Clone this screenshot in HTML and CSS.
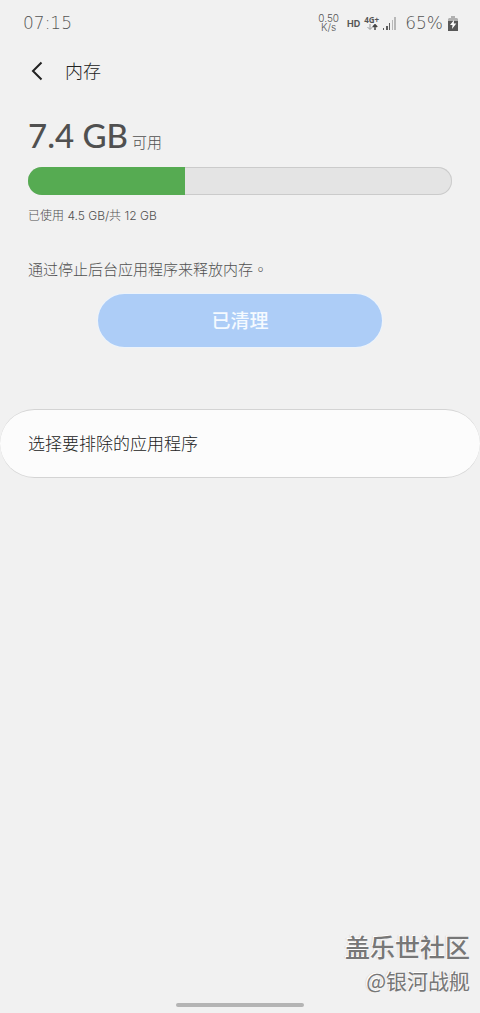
FILE: index.html
```html
<!DOCTYPE html>
<html lang="zh-CN">
<head>
<meta charset="utf-8">
<meta name="viewport" content="width=device-width, initial-scale=1">
<title>内存</title>
<link rel="stylesheet" href="styles.css">
</head>
<body>
<div class="screen">
  <div class="status">
    <span class="clock">07:15</span>
    <div class="indicators">
      <div class="speed"><span>0.50</span><span>K/s</span></div>
      <span class="hd">HD</span>
      <div class="network">
        <span>4G+</span>
        <svg width="12" height="6" viewBox="0 0 12 6" fill="none">
          <path d="M4 0v5M1.500 3L4 5.500L6.500 3" stroke="#999"/>
          <path d="M9 6V1M6.800 3L9 .7L11.200 3" stroke="#444" stroke-width="1.500"/>
        </svg>
      </div>
      <svg class="signal" width="14" height="13" viewBox="0 0 14 13">
        <path d="M0 11h1v2H0zM3 9h2v4H3zM6 6h1v7H6z" fill="#5c5c5c"/>
        <path d="M9 3h1v10H9zM11 0h2v13h-2z" fill="#b8b8b8"/>
      </svg>
      <span class="percent">65%</span>
      <svg class="battery" width="10" height="15" viewBox="0 0 10 15">
        <path d="M3 0h4v2h2l1 1v3H0V3l1-1h2z" fill="#b0b0b0"/>
        <path d="M0 5h10v10H0z" fill="#585858"/>
        <path d="M6 4L2 9h2.500L4 13l4.300-5.500H5.800z" fill="#fff"/>
      </svg>
    </div>
  </div>

  <header class="header">
    <button class="back" aria-label="返回">
      <svg width="12" height="20" viewBox="0 0 12 20" fill="none"><path d="M10.500 1.500L2 10l8.500 8.500" stroke="#222" stroke-width="2"/></svg>
    </button>
    <h1 class="title">内存</h1>
  </header>

  <main class="main">
    <section class="memory">
      <p class="available"><span class="amount">7.4 GB</span><span class="unit">可用</span></p>
      <div class="bar" role="progressbar" aria-label="内存" aria-valuenow="37"><div class="fill" style="width: 37%"></div></div>
      <p class="usage">已使用 4.5 GB/共 12 GB</p>
      <p class="hint">通过停止后台应用程序来释放内存<span lang="zh-TW" class="stop">。</span></p>
      <button class="clean" disabled>已清理</button>
    </section>
    <button class="card">选择要排除的应用程序</button>
  </main>

  <footer class="footer">
    <div class="community">盖乐世社区</div>
    <div class="author">@银河战舰</div>
    <div class="home"></div>
  </footer>
</div>
</body>
</html>
```
FILE: styles.css
```css
* { box-sizing: border-box; }

body {
  margin: 0;
  background: #f1f1f1;
  color: #505050;
  font-family: "Noto Sans", "Noto Sans CJK SC", sans-serif;
}

h1, p { margin: 0; font-weight: 400; }
button { border: 0; padding: 0; font-family: inherit; }
svg { display: block; }

.screen {
  min-height: 100vh;
  display: flex;
  flex-direction: column;
}

.status {
  height: 46px;
  padding: 0 22px 0 23px;
  display: flex;
  align-items: center;
  justify-content: space-between;
  color: #555;
}

.clock, .percent {
  font-family: "DejaVu Sans Light", "DejaVu Sans", sans-serif;
  font-weight: 200;
  font-size: 17px;
  line-height: 20px;
}

.indicators { display: flex; align-items: center; }

.speed {
  display: flex;
  flex-direction: column;
  align-items: center;
  font-family: Inter, sans-serif;
  font-size: 10px;
  font-weight: 300;
  line-height: 9px;
}

.hd {
  margin-left: 8px;
  font-family: Inter, sans-serif;
  font-size: 9px;
  font-weight: 700;
}

.network {
  margin-left: 4px;
  display: flex;
  flex-direction: column;
  align-items: center;
  font-size: 8px;
  font-weight: 700;
  line-height: 8px;
}

.signal { margin-left: 4px; }
.percent { margin-left: 8px; }
.battery { margin-left: 5px; }

.header {
  height: 50px;
  padding: 0 28px;
  display: flex;
  align-items: center;
  gap: 19px;
}

.back {
  width: 18px;
  height: 32px;
  display: flex;
  align-items: center;
  justify-content: center;
  background: none;
}

.title {
  padding-bottom: 3px;
  font-family: "Noto Sans CJK SC", sans-serif;
  font-weight: 300;
  font-size: 18px;
  line-height: 24px;
  color: #222;
}

.main { flex: 1; }

.memory {
  padding: 19px 28px 0;
  display: flex;
  flex-direction: column;
}

.available {
  display: flex;
  align-items: baseline;
  gap: 4px;
  line-height: 40px;
}

.amount {
  font-family: Lato, sans-serif;
  font-size: 33px;
  font-weight: 500;
}

.unit, .hint {
  font-family: "Noto Sans CJK SC", sans-serif;
  font-weight: 300;
  font-size: 15px;
}

.unit { line-height: 20px; }

.bar {
  height: 28px;
  margin-top: 12px;
  border-radius: 14px;
  background: #e4e4e4;
  box-shadow: inset 0 0 0 1px #cbcbcb;
  overflow: hidden;
}

.fill { height: 100%; background: #56ab52; }

.usage {
  margin-top: 11px;
  font-family: Inter, "Noto Sans CJK SC", sans-serif;
  font-weight: 300;
  font-size: 12px;
  line-height: 20px;
}

.hint { margin-top: 31px; line-height: 24px; }
.stop { font-family: "Noto Sans CJK TC", sans-serif; }

.clean {
  align-self: center;
  width: 67%;
  height: 53px;
  margin-top: 13px;
  padding-bottom: 2px;
  border-radius: 27px;
  background: #adcdf7;
  box-shadow: 0 0 0 1px #ecf3fb;
  color: #f5faff;
  font-size: 19px;
  font-weight: 500;
}

.card {
  display: block;
  width: 100%;
  height: 69px;
  margin-top: 62px;
  padding: 0 28px 2px;
  border: 1px solid #d4d4d4;
  border-width: 1px 0;
  border-radius: 35px;
  background: #fcfcfc;
  color: #222;
  font-family: "Noto Sans CJK SC", sans-serif;
  font-weight: 300;
  font-size: 17px;
  text-align: left;
}

.footer {
  padding: 0 10px 6px;
  display: flex;
  flex-direction: column;
  align-items: flex-end;
  color: #777;
  text-shadow: -1px -1px 0 #fff, -2px -1px 1px #e4dcd4;
}

.community { font-size: 25px; font-weight: 500; line-height: 36px; }

.author {
  font-family: "Noto Sans CJK SC", sans-serif;
  font-size: 21px;
  font-weight: 400;
  line-height: 30px;
}

.home {
  align-self: center;
  width: 128px;
  height: 4px;
  margin-top: 8px;
  border-radius: 2px;
  background: #b4b4b4;
}
```
